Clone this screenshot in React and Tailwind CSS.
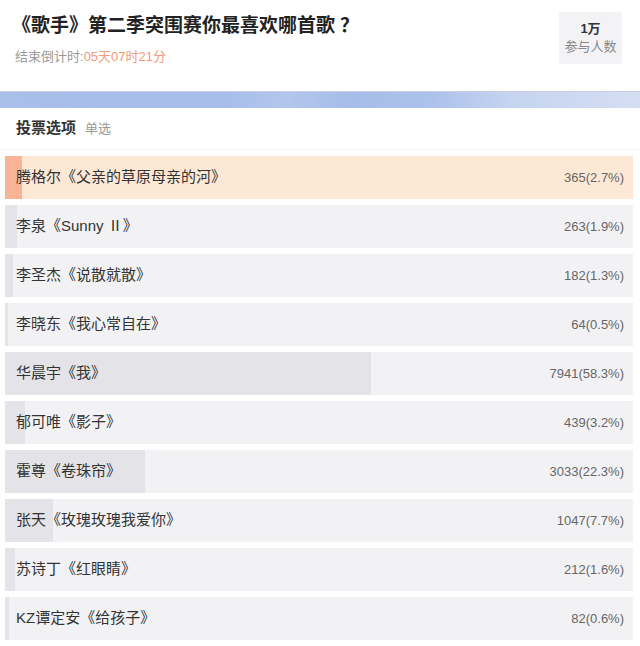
import React from "react";

const rows = [
  { name: "腾格尔《父亲的草原母亲的河》", v: "365(2.7%)", p: 2.7, hi: true },
  { name: "李泉《Sunny Ⅱ》", v: "263(1.9%)", p: 1.9 },
  { name: "李圣杰《说散就散》", v: "182(1.3%)", p: 1.3 },
  { name: "李晓东《我心常自在》", v: "64(0.5%)", p: 0.5 },
  { name: "华晨宇《我》", v: "7941(58.3%)", p: 58.3 },
  { name: "郁可唯《影子》", v: "439(3.2%)", p: 3.2 },
  { name: "霍尊《卷珠帘》", v: "3033(22.3%)", p: 22.3 },
  { name: "张天《玫瑰玫瑰我爱你》", v: "1047(7.7%)", p: 7.7 },
  { name: "苏诗丁《红眼睛》", v: "212(1.6%)", p: 1.6 },
  { name: "KZ谭定安《给孩子》", v: "82(0.6%)", p: 0.6 },
];

export default function App() {
  return (
    <div className="w-[640px] h-[646px] bg-white overflow-hidden font-['Liberation_Sans','Noto_Sans_CJK_SC',sans-serif] text-[#333]">
      <div className="h-[91px] flex justify-between pl-[12px] pr-[18px]">
        <div className="flex flex-col">
          <div className="mt-[10px] text-[19px] leading-[28px] font-bold text-[#222]">
            《歌手》第二季突围赛你最喜欢哪首歌<span className="ml-[5px] font-['Noto_Sans_CJK_SC',sans-serif]">？</span>
          </div>
          <div className="mt-[7px] text-[13px] leading-[20px] text-[#999] pl-[3px]">
            结束倒计时:<span className="text-[#f39a7a]">05天07时21分</span>
          </div>
        </div>
        <div className="mt-[12px] w-[63px] h-[52px] bg-[#f3f3f5] flex flex-col items-center justify-center">
          <div className="text-[13px] leading-[18px] font-bold text-[#333]">1万</div>
          <div className="text-[13px] leading-[18px] text-[#888]">参与人数</div>
        </div>
      </div>
      <div className="h-[17px] border-t border-[#c8cfdc] bg-[linear-gradient(90deg,#a9bfea_0%,#a7bdea_35%,#b3c6ec_45%,#a6bde9_55%,#adc2eb_68%,#c6d4f0_80%,#d4def3_100%)]" />
      <div className="h-[42px] flex items-center pl-[16px] border-b border-[#f3f3f3]">
        <span className="text-[15px] font-bold text-[#333]">投票选项</span>
        <span className="ml-[9px] text-[13px] text-[#999]">单选</span>
      </div>
      <div className="mt-[6px] flex flex-col gap-[6px] px-[5px] pr-[7px]">
        {rows.map((r, i) => (
          <div
            key={i}
            className={
              "relative h-[43px] flex items-center justify-between pl-[11px] pr-[9px] " +
              (r.hi ? "bg-[#fde8d5]" : "bg-[#f2f2f5]")
            }
          >
            <div
              className={"absolute left-0 top-0 bottom-0 " + (r.hi ? "bg-[#f9b497]" : "bg-[#e4e4e8]")}
              style={{ width: `${r.p}%` }}
            />
            <span className="relative text-[15px] text-[#333]">{r.name}</span>
            <span className="relative text-[13px] text-[#666]">{r.v}</span>
          </div>
        ))}
      </div>
    </div>
  );
}
